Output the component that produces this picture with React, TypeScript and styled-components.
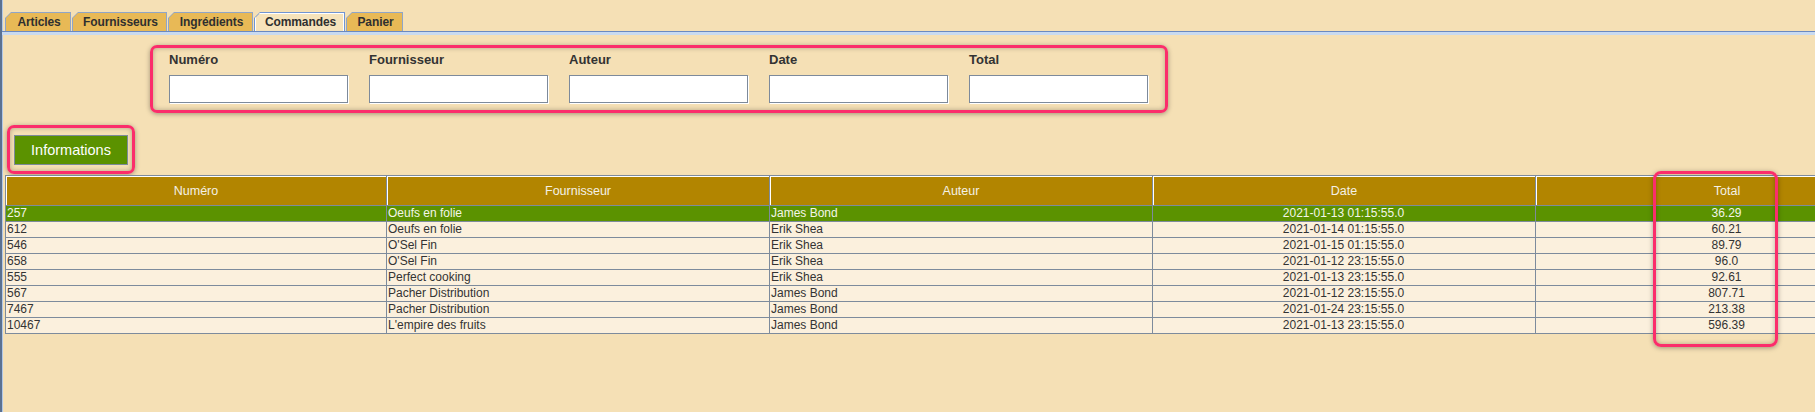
import React from "react";
import styled, { createGlobalStyle } from "styled-components";

const GlobalStyle = createGlobalStyle`
  html, body { margin: 0; padding: 0; background: #f5e0b5; overflow: hidden; }
  * { box-sizing: border-box; }
`;

const PINK = "#fb2d6b";
const GRID = "#7d8b9c";

const Page = styled.div`
  position: relative;
  width: 1815px;
  height: 412px;
  overflow: hidden;
  background: #f5e0b5;
  border-left: 2px solid #5b7191;
  box-shadow: inset 1px 0 0 #b1c7e6;
  font-family: "Liberation Sans", Arial, sans-serif;
  color: #333;
`;

const TabBar = styled.div`
  display: flex;
  align-items: flex-end;
  gap: 1px;
  height: 31px;
  padding: 12px 0 0 3px;
`;

const TabFrame = styled.div<{ $active: boolean; $w: number }>`
  width: ${(p) => p.$w}px;
  height: 19px;
  padding: 1px 1px 0 1px;
  background: ${(p) => (p.$active ? "#7094d2" : "#8fa5c8")};
  clip-path: polygon(6px 0, 100% 0, 100% 100%, 0 100%, 0 6px);
`;

const TabFace = styled.div<{ $active: boolean }>`
  height: 100%;
  display: flex;
  align-items: center;
  justify-content: center;
  padding-left: 2px;
  background: ${(p) => (p.$active ? "#f6e3bb" : "#e8b956")};
  box-shadow: ${(p) => (p.$active ? "inset 1px 1px 0 #ffffff, inset -1px 0 0 #ffffff" : "none")};
  clip-path: polygon(5px 0, 100% 0, 100% 100%, 0 100%, 0 5px);
  font-size: 12px;
  font-weight: bold;
  color: #2f2f2f;
  letter-spacing: -0.1px;
`;

const TabRule = styled.div`
  height: 4px;
  border-top: 1px solid #6a89c1;
  background: #c9daef;
`;

const Highlight = styled.div`
  border: 3px solid ${PINK};
  border-radius: 7px;
  box-shadow: 0 1px 5px rgba(0, 0, 0, 0.35), inset 0 0 5px rgba(0, 0, 0, 0.28);
`;

const FilterPanel = styled(Highlight)`
  display: flex;
  gap: 21px;
  width: 1018px;
  height: 68px;
  margin: 10px 0 0 148px;
  padding: 4px 0 0 16px;
`;

const Field = styled.div`
  display: flex;
  flex-direction: column;
  gap: 8px;
  width: 179px;
`;

const FieldLabel = styled.label`
  font-size: 13px;
  font-weight: bold;
  line-height: 15px;
  color: #333;
`;

const FieldInput = styled.input`
  width: 179px;
  height: 28px;
  margin: 0;
  padding: 0 3px;
  background: #ffffff;
  border: 1px solid #7d8a9b;
  box-shadow: 1px 1px 0 #ffffff;
  outline: none;
  font-family: inherit;
`;

const InfoBox = styled(Highlight)`
  width: 128px;
  height: 49px;
  margin: 12px 0 0 5px;
  padding: 7px 0 0 4px;
`;

const InfoButton = styled.button`
  width: 114px;
  height: 30px;
  padding: 0;
  background: #5b9200;
  border: 1px solid #7c8a9a;
  color: #ffffff;
  font-family: "Liberation Sans", Arial, sans-serif;
  font-size: 14.5px;
  cursor: pointer;
`;

const Table = styled.div`
  width: 1913px;
  margin: 1px 0 0 3px;
  border-top: 1px solid ${GRID};
  border-left: 1px solid ${GRID};
`;

const COLS = "381px 383px 383px 383px 383px";

const HeaderRow = styled.div`
  display: grid;
  grid-template-columns: ${COLS};
  height: 30px;
`;

const HeaderCell = styled.div`
  display: flex;
  align-items: center;
  justify-content: center;
  background: #b28500;
  border-right: 1px solid ${GRID};
  border-bottom: 1px solid ${GRID};
  box-shadow: inset 1px 1px 0 #ffffff;
  color: #f4f1e6;
  font-size: 12.5px;
`;

const Row = styled.div<{ $selected: boolean }>`
  display: grid;
  grid-template-columns: ${COLS};
  height: 16px;
  background: ${(p) => (p.$selected ? "#5b9200" : "#fbf0dd")};
  color: ${(p) => (p.$selected ? "#f3f6e8" : "#333333")};
`;

const Cell = styled.div<{ $align: "left" | "center" }>`
  border-right: 1px solid ${GRID};
  border-bottom: 1px solid ${GRID};
  padding: 0 2px 0 1px;
  font-size: 12px;
  line-height: 15px;
  text-align: ${(p) => p.$align};
  white-space: nowrap;
  overflow: hidden;
`;

const TotalMark = styled(Highlight)`
  position: absolute;
  left: 1651px;
  top: 171px;
  width: 125px;
  height: 176px;
  border-radius: 8px;
  pointer-events: none;
`;

const tabs = [
  { label: "Articles", w: 66 },
  { label: "Fournisseurs", w: 95 },
  { label: "Ingrédients", w: 85 },
  { label: "Commandes", w: 91, active: true },
  { label: "Panier", w: 57 },
];

const fields = ["Numéro", "Fournisseur", "Auteur", "Date", "Total"];

const columns: { label: string; align: "left" | "center" }[] = [
  { label: "Numéro", align: "left" },
  { label: "Fournisseur", align: "left" },
  { label: "Auteur", align: "left" },
  { label: "Date", align: "center" },
  { label: "Total", align: "center" },
];

const rows = [
  ["257", "Oeufs en folie", "James Bond", "2021-01-13 01:15:55.0", "36.29"],
  ["612", "Oeufs en folie", "Erik Shea", "2021-01-14 01:15:55.0", "60.21"],
  ["546", "O'Sel Fin", "Erik Shea", "2021-01-15 01:15:55.0", "89.79"],
  ["658", "O'Sel Fin", "Erik Shea", "2021-01-12 23:15:55.0", "96.0"],
  ["555", "Perfect cooking", "Erik Shea", "2021-01-13 23:15:55.0", "92.61"],
  ["567", "Pacher Distribution", "James Bond", "2021-01-12 23:15:55.0", "807.71"],
  ["7467", "Pacher Distribution", "James Bond", "2021-01-24 23:15:55.0", "213.38"],
  ["10467", "L'empire des fruits", "James Bond", "2021-01-13 23:15:55.0", "596.39"],
];

export default function App() {
  return (
    <>
      <GlobalStyle />
      <Page>
        <TabBar>
          {tabs.map((t) => (
            <TabFrame key={t.label} $active={!!t.active} $w={t.w}>
              <TabFace $active={!!t.active}>{t.label}</TabFace>
            </TabFrame>
          ))}
        </TabBar>
        <TabRule />
        <FilterPanel>
          {fields.map((f) => (
            <Field key={f}>
              <FieldLabel>{f}</FieldLabel>
              <FieldInput type="text" />
            </Field>
          ))}
        </FilterPanel>
        <InfoBox>
          <InfoButton>Informations</InfoButton>
        </InfoBox>
        <Table>
          <HeaderRow>
            {columns.map((c) => (
              <HeaderCell key={c.label}>{c.label}</HeaderCell>
            ))}
          </HeaderRow>
          {rows.map((r, i) => (
            <Row key={r[0]} $selected={i === 0}>
              {r.map((v, j) => (
                <Cell key={j} $align={columns[j].align}>
                  {v}
                </Cell>
              ))}
            </Row>
          ))}
        </Table>
        <TotalMark />
      </Page>
    </>
  );
}
